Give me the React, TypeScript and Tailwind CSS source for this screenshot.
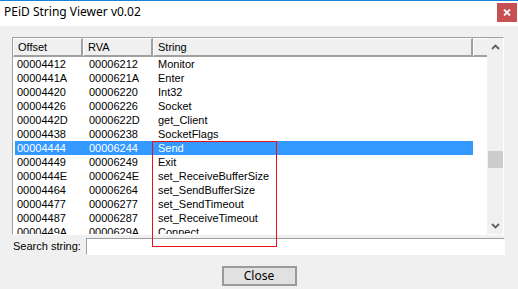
import React from "react";

const rows: [string, string, string][] = [
  ["00004412", "00006212", "Monitor"],
  ["0000441A", "0000621A", "Enter"],
  ["00004420", "00006220", "Int32"],
  ["00004426", "00006226", "Socket"],
  ["0000442D", "0000622D", "get_Client"],
  ["00004438", "00006238", "SocketFlags"],
  ["00004444", "00006244", "Send"],
  ["00004449", "00006249", "Exit"],
  ["0000444E", "0000624E", "set_ReceiveBufferSize"],
  ["00004464", "00006264", "set_SendBufferSize"],
  ["00004477", "00006277", "set_SendTimeout"],
  ["00004487", "00006287", "set_ReceiveTimeout"],
  ["0000449A", "0000629A", "Connect"],
];

const listFont = { fontFamily: '"Liberation Sans", Arial, sans-serif' };

export default function App() {
  return (
    <div
      className="relative w-[518px] h-[289px] overflow-hidden bg-[#f0f0f0] flex flex-col text-black"
      style={{ fontFamily: '"Noto Sans", "Open Sans", sans-serif' }}
    >
      {/* Title bar */}
      <div className="h-[26px] shrink-0 bg-white border-t border-[#1883d7] flex items-start justify-between">
        <div className="pl-[4px] pt-[2px] text-[12px] leading-[18px]">PEiD String Viewer v0.02</div>
        <div className="mt-[2px] mr-[1px] w-[20px] h-[19px] bg-[#c75050] flex items-center justify-center">
          <svg width="8" height="7" viewBox="0 0 8 7">
            <path d="M1 0.5 L7 6.5 M7 0.5 L1 6.5" stroke="white" strokeWidth="1.8" />
          </svg>
        </div>
      </div>

      {/* List view */}
      <div className="mt-[11px] ml-[12px] w-[492px] h-[198px] shrink-0 flex border border-t-[#a0a0a0] border-l-[#a0a0a0] border-r-white border-b-white" style={listFont}>
        <div className="w-[474px] h-full bg-white flex flex-col overflow-hidden">
          <div className="h-[19px] shrink-0 flex text-[11px] bg-[#f0f0f0]">
            <div className="w-[70px] h-full flex items-center pl-[4px] border-t border-l border-t-white border-l-white border-r-2 border-b-2 border-r-[#a0a0a0] border-b-[#a0a0a0]">Offset</div>
            <div className="w-[70px] h-full flex items-center pl-[4px] border-t border-l border-t-white border-l-white border-r-2 border-b-2 border-r-[#a0a0a0] border-b-[#a0a0a0]">RVA</div>
            <div className="w-[320px] h-full flex items-center pl-[4px] border-t border-l border-t-white border-l-white border-r-2 border-b-2 border-r-[#a0a0a0] border-b-[#a0a0a0]">String</div>
            <div className="w-[14px] h-full border-t border-l border-t-white border-l-white border-b-2 border-b-[#a0a0a0]"></div>
          </div>
          <div className="flex flex-col text-[11px]">
            {rows.map(([o, r, s], i) => {
              const sel = i === 6;
              return (
                <div
                  key={o}
                  className={
                    "ml-[2px] w-[458px] h-[14px] shrink-0 flex items-center leading-[14px] " +
                    (sel ? "bg-[#3399ff] text-white" : "")
                  }
                >
                  <div className="w-[68px] pl-[2px]">{o}</div>
                  <div className="w-[70px] pl-[6px]">{r}</div>
                  <div className="w-[320px] pl-[5px] whitespace-nowrap">{s}</div>
                </div>
              );
            })}
          </div>
        </div>
        {/* Scrollbar */}
        <div className="w-[16px] h-full bg-[#f0f0f0] flex flex-col items-center">
          <div className="h-[17px] w-full flex items-center justify-center">
            <svg width="9" height="6" viewBox="0 0 9 6">
              <path d="M1 5 L4.5 1.5 L8 5" stroke="#606060" strokeWidth="1.8" fill="none" />
            </svg>
          </div>
          <div className="mt-[96px] w-[15px] h-[17px] bg-[#cdcdcd]"></div>
          <div className="flex-1"></div>
          <div className="h-[17px] w-full flex items-center justify-center">
            <svg width="9" height="6" viewBox="0 0 9 6">
              <path d="M1 1 L4.5 4.5 L8 1" stroke="#606060" strokeWidth="1.8" fill="none" />
            </svg>
          </div>
        </div>
      </div>

      {/* Search */}
      <div className="mt-[3px] h-[17px] flex items-center" style={listFont}>
        <div className="pl-[13px] w-[86px] text-[11px]">Search string:</div>
        <div className="w-[419px] h-[17px] bg-white border border-t-[#a0a0a0] border-l-[#a0a0a0] border-r-white border-b-white"></div>
      </div>

      {/* Close button */}
      <div className="mt-[11px] flex justify-center">
        <div
          className="w-[75px] h-[20px] bg-[#e1e1e1] border-2 border-[#9a9a9a] flex items-center justify-center text-[12px]"
          style={{ fontFamily: '"Noto Sans", "Open Sans", sans-serif' }}
        >
          Close
        </div>
      </div>

      {/* Red annotation rectangle */}
      <div className="absolute left-[152px] top-[141px] w-[125px] h-[106px] border border-[#e8111b] pointer-events-none"></div>
    </div>
  );
}
